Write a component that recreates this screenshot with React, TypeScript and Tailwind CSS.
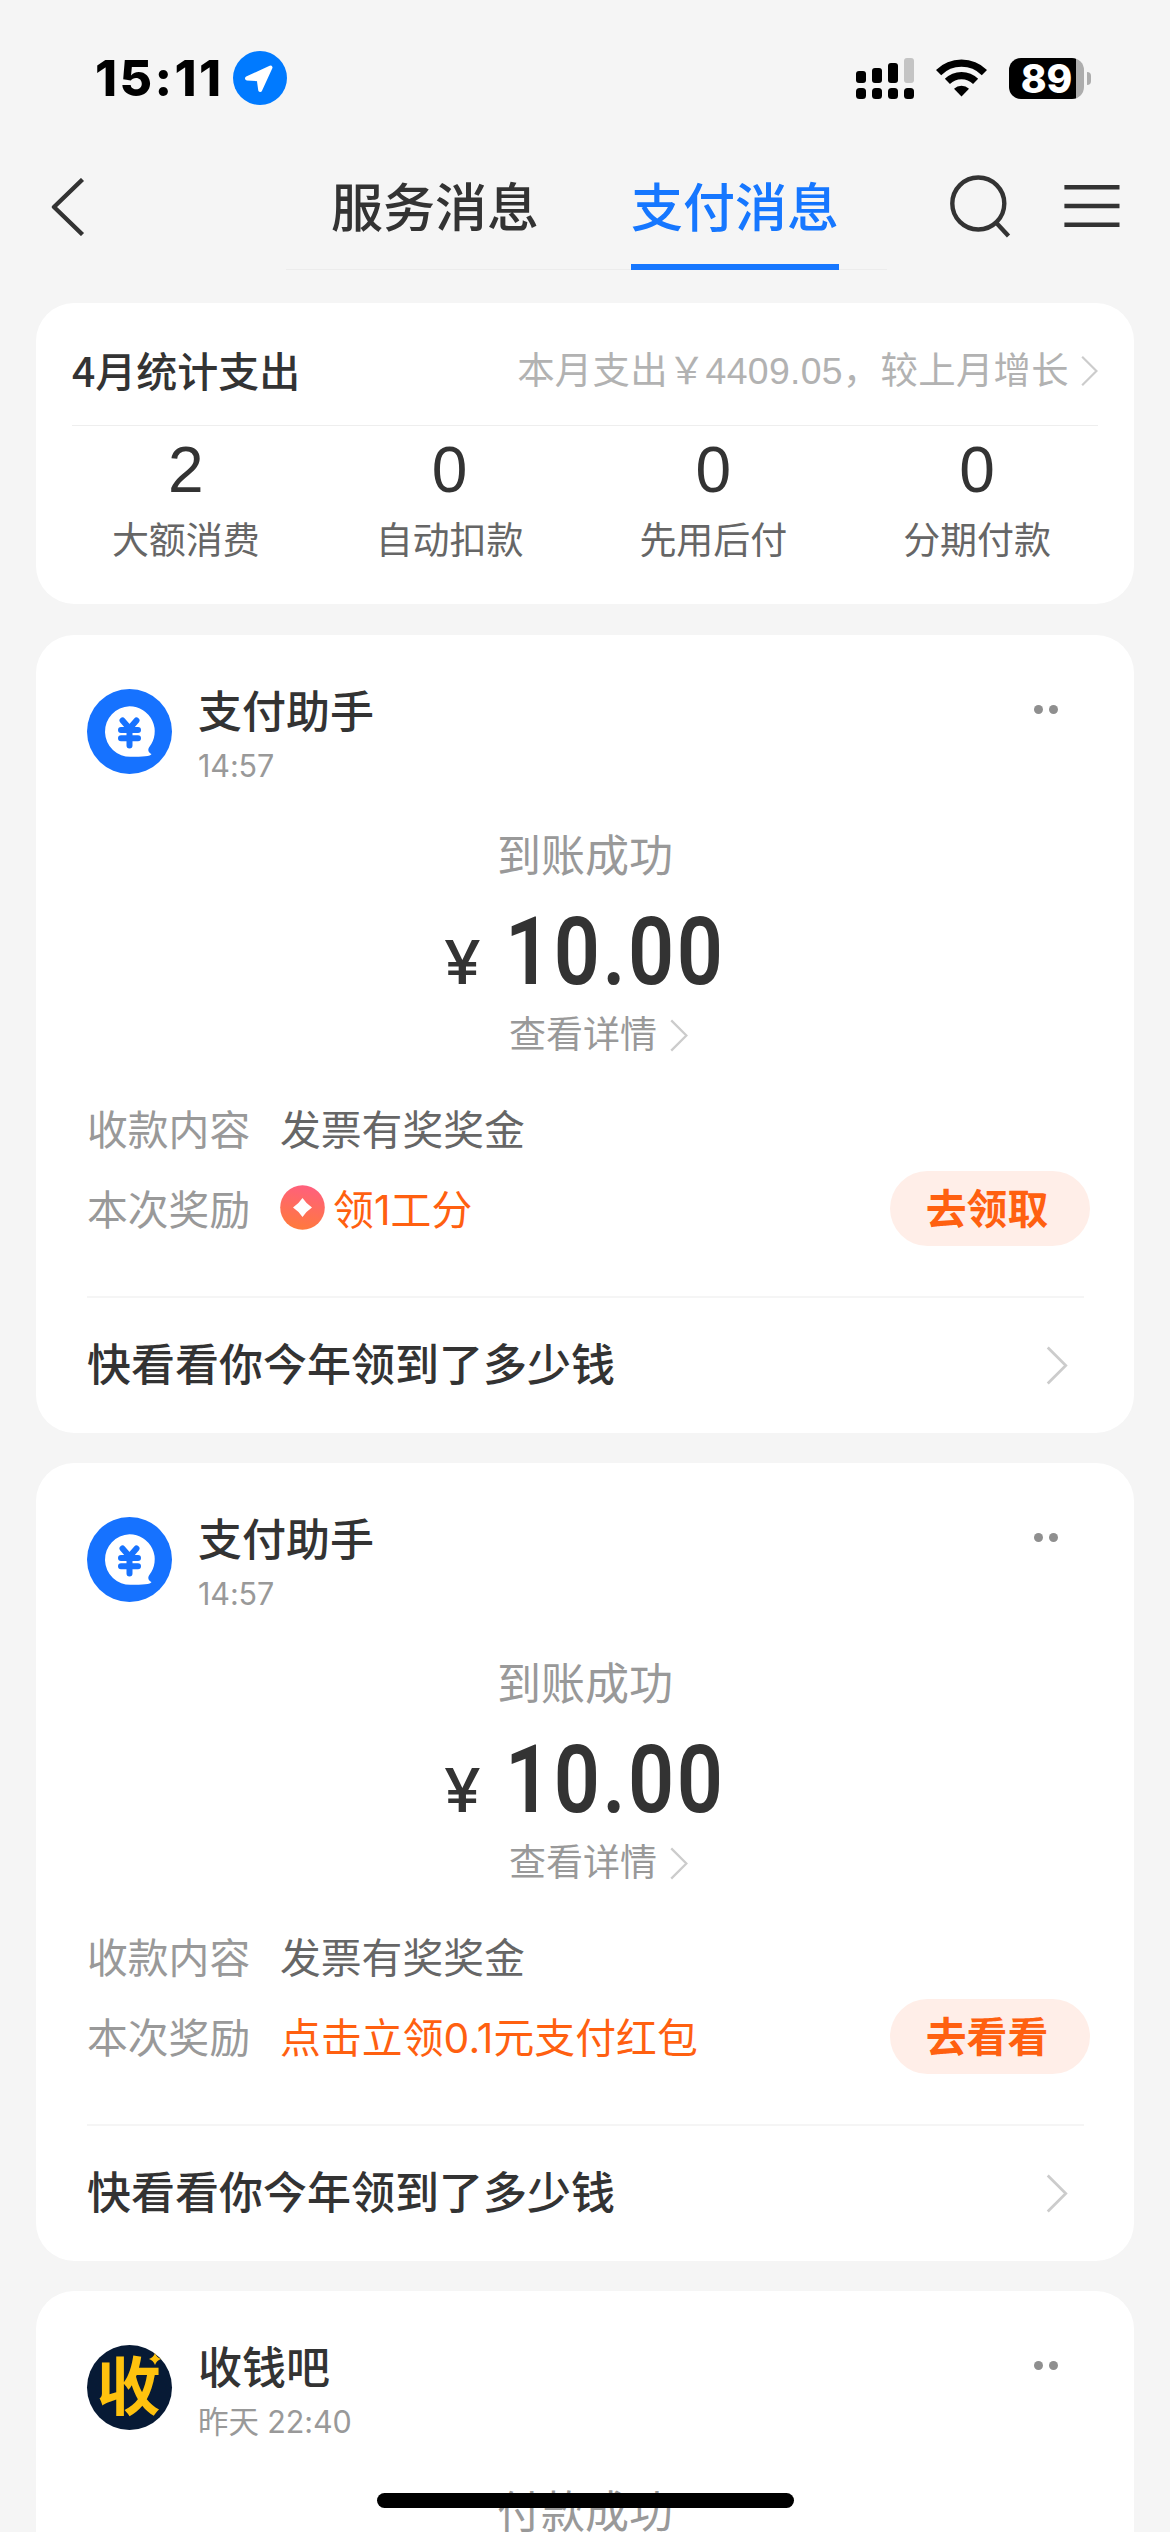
import React from 'react'

type Reward = {
    text: string
    action: string
    coin?: boolean
}

type Message = {
    sender: string
    time: string
    status: string
    amount?: string
    content?: string
    reward?: Reward
    footer?: string
    logo: 'assistant' | 'shouqianba'
}

const stats = [
    { value: 2, label: '大额消费' },
    { value: 0, label: '自动扣款' },
    { value: 0, label: '先用后付' },
    { value: 0, label: '分期付款' },
]

const messages: Message[] = [
    {
        sender: '支付助手',
        time: '14:57',
        status: '到账成功',
        amount: '10.00',
        content: '发票有奖奖金',
        reward: { text: '领1工分', action: '去领取', coin: true },
        footer: '快看看你今年领到了多少钱',
        logo: 'assistant',
    },
    {
        sender: '支付助手',
        time: '14:57',
        status: '到账成功',
        amount: '10.00',
        content: '发票有奖奖金',
        reward: { text: '点击立领0.1元支付红包', action: '去看看' },
        footer: '快看看你今年领到了多少钱',
        logo: 'assistant',
    },
    {
        sender: '收钱吧',
        time: '昨天 22:40',
        status: '付款成功',
        logo: 'shouqianba',
    },
]

const Chevron = ({ className }: { className: string }) => (
    <svg
        className={className}
        viewBox="0 0 22 40"
        fill="none"
        stroke="currentColor"
        strokeWidth="2.8"
    >
        <path d="M1.5 1.5 L20 20 L1.5 38.5" />
    </svg>
)

const StatusBar = () => (
    <div className="flex h-[156px] items-center pl-[95px] pr-[79px]">
        <span className="w-[138px] whitespace-nowrap font-['Inter',sans-serif] text-[50px] font-extrabold leading-[60px] tracking-[2.4px] text-black">
            15:11
        </span>
        <svg className="h-[54px] w-[54px]" viewBox="0 0 54 54">
            <circle cx="27" cy="27" r="27" fill="#007aff" />
            <path
                d="M37.5 16.5 L27.2 39 L25.7 28.3 L14 27.4 Z"
                fill="#fff"
                stroke="#fff"
                strokeWidth="4"
                strokeLinejoin="round"
            />
        </svg>
        <div className="ml-auto flex items-center">
            <svg className="h-[41px] w-[59px]" viewBox="0 0 59 41">
                <rect x="0" y="13" width="10" height="12" rx="3" />
                <rect x="16" y="10" width="10" height="15" rx="3" />
                <rect x="32" y="5" width="10" height="20" rx="3" />
                <rect x="48" y="0" width="10" height="25" rx="3" fill="#c4c4c4" />
                <rect x="0" y="30" width="10" height="11" rx="3.5" />
                <rect x="16" y="30" width="10" height="11" rx="3.5" />
                <rect x="32" y="30" width="10" height="11" rx="3.5" />
                <rect x="48" y="30" width="10" height="11" rx="3.5" />
            </svg>
            <svg className="ml-[21px] h-[38px] w-[51px]" viewBox="0 0 51 38">
                <path
                    d="M2.6 13.6 A32.5 32.5 0 0 1 48.4 13.6"
                    fill="none"
                    stroke="#000"
                    strokeWidth="7.4"
                />
                <path
                    d="M11.4 22.4 A20 20 0 0 1 39.6 22.4"
                    fill="none"
                    stroke="#000"
                    strokeWidth="7.2"
                />
                <path d="M25.5 37.5 L18 29.8 A10.8 10.8 0 0 1 33 29.8 Z" />
            </svg>
            <div className="ml-[22px] flex h-[41px] w-[75px] items-center justify-center rounded-[12px] bg-[linear-gradient(90deg,#000_67px,#adadad_67px)]">
                <span className="font-['Inter',sans-serif] text-[39px] font-extrabold leading-[41px] text-white">
                    89
                </span>
            </div>
            <div className="ml-[3px] h-[13px] w-[4px] rounded-r-full bg-[#adadad]" />
        </div>
    </div>
)

const NavBar = () => (
    <div className="flex h-[114px] pl-[50px] text-[#333]">
        <svg
            className="mt-[22px] h-[58px] w-[36px]"
            viewBox="0 0 36 58"
            fill="none"
            stroke="currentColor"
            strokeWidth="4.4"
        >
            <path d="M32.5 1.5 L4 29 L32.5 56.5" strokeLinejoin="round" />
        </svg>
        <div className="ml-[200px] flex w-[601px] gap-[92px] border-b border-[#ececec] pl-[45px] text-[52px] font-medium leading-[106px]">
            <div>服务消息</div>
            <div className="-mb-px flex flex-col justify-between text-[#1677ff]">
                支付消息
                <div className="h-[6px] bg-[#1677ff]" />
            </div>
        </div>
        <svg
            className="ml-[63px] mt-[18px] h-[66px] w-[62px]"
            viewBox="0 0 62 66"
            fill="none"
            stroke="currentColor"
            strokeWidth="4.4"
        >
            <circle cx="28.3" cy="29.5" r="26" />
            <path d="M46 48.5 L58.5 62" />
        </svg>
        <svg
            className="ml-[52px] mt-[22px] h-[56px] w-[56px]"
            viewBox="0 0 56 56"
            stroke="currentColor"
            strokeWidth="4.4"
        >
            <path d="M0.4 9.3 H55.5 M0.4 28 H55.5 M0.4 46.7 H55.5" />
        </svg>
    </div>
)

const StatsCard = () => (
    <div className="mt-[33px] h-[301px] rounded-[38px] bg-white">
        <div className="mx-9 flex h-[123px] items-center border-b border-[#eee] pt-[14px]">
            <span className="mb-[5px] font-['Noto_Sans_CJK_SC',sans-serif] text-[41px] font-medium leading-[48px] text-[#333]">
                4月统计支出
            </span>
            <span className="ml-auto whitespace-nowrap text-[37.4px] leading-[44px] tracking-[0.3px] text-[#b2b2b2]">
                本月支出￥4409.05，较上月增长
            </span>
            <Chevron className="ml-3 h-[32px] w-[17px] text-[#ccc]" />
        </div>
        <div className="grid grid-cols-4 pl-[18px] pr-[25px] pt-3 text-center">
            {stats.map((stat) => (
                <div key={stat.label}>
                    <div className="text-[64px] leading-[64px] text-[#333]">
                        {stat.value}
                    </div>
                    <div className="mt-[18px] text-[37px] leading-[44px] text-[#666]">
                        {stat.label}
                    </div>
                </div>
            ))}
        </div>
    </div>
)

const AssistantLogo = () => (
    <svg className="h-[85px] w-[85px]" viewBox="0 0 85 85">
        <circle cx="42.5" cy="42.5" r="42.5" fill="#1672ff" />
        <path
            d="M42.5 17.3 A25.2 25.2 0 0 1 62 58.5 C60.5 61 61.5 63.5 64.5 65 C64 67.3 55 67.8 44 67.8 A25.2 25.2 0 0 1 42.5 17.3 Z"
            fill="#fff"
        />
        <path
            d="M35.5 31.5 L42.5 39.5 L49.5 31.5 M42.5 39.5 V56.5 M34 41 H51 M34 49.3 H51"
            fill="none"
            stroke="#1672ff"
            strokeWidth="6"
            strokeLinecap="round"
            strokeLinejoin="round"
        />
    </svg>
)

const ShouqianbaLogo = () => (
    <div className="relative flex h-[85px] w-[85px] items-center justify-center rounded-full bg-[#071a35]">
        <span className="pr-[2px] text-[64px] font-bold leading-[64px] text-[#ffc20e]">
            收
        </span>
        <svg
            className="absolute right-[11px] top-[8px] h-[12px] w-[12px]"
            viewBox="0 0 12 12"
            fill="#ffc20e"
        >
            <path d="M6 0 Q7.5 4.5 12 6 Q7.5 7.5 6 12 Q4.5 7.5 0 6 Q4.5 4.5 6 0 Z" />
        </svg>
    </div>
)

const Coin = () => (
    <svg className="mb-[2px] mr-[8px] h-[45px] w-[45px]" viewBox="0 0 45 45">
        <defs>
            <linearGradient id="coin" x1="0.6" y1="0" x2="0.4" y2="1">
                <stop offset="0" stopColor="#ff5f7e" />
                <stop offset="1" stopColor="#ff7a3c" />
            </linearGradient>
        </defs>
        <circle cx="22.5" cy="22.5" r="22.3" fill="url(#coin)" />
        <path
            d="M22.5 13 Q26.3 18.7 32 22.5 Q26.3 26.3 22.5 32 Q18.7 26.3 13 22.5 Q18.7 18.7 22.5 13 Z"
            fill="#fff"
        />
    </svg>
)

const MessageCard = ({ message }: { message: Message }) => {
    return (
        <div className="h-[798px] shrink-0 rounded-[38px] bg-white pl-[51px] pr-[44px] pt-[54px]">
            <div className="flex h-[94px]">
                {message.logo === 'assistant' ? (
                    <AssistantLogo />
                ) : (
                    <ShouqianbaLogo />
                )}
                <div className="ml-[26px]">
                    <div className="text-[44px] font-medium leading-[48px] text-[#333]">
                        {message.sender}
                    </div>
                    <div className="mt-[11px] font-['Inter','Noto_Sans_CJK_SC',sans-serif] text-[30.5px] leading-[36px] tracking-[-0.1px] text-[#999]">
                        {message.time}
                    </div>
                </div>
                <div className="ml-auto mr-[32px] mt-[16px] flex gap-[6px]">
                    <div className="h-[9px] w-[9px] rounded-full bg-[#8f8f8f]" />
                    <div className="h-[9px] w-[9px] rounded-full bg-[#8f8f8f]" />
                </div>
            </div>
            <div className="mt-[48px] pr-[7px] text-center text-[44px] leading-[52px] text-[#999]">
                {message.status}
            </div>
            {message.amount && (
                <div className="mt-[29px] flex h-[80px] items-baseline pl-[357px] text-[#333]">
                    <span className="w-[61px] origin-left scale-x-110 font-['Inter',sans-serif] text-[60px] font-medium leading-[80px]">
                        ¥
                    </span>
                    <span className="origin-left scale-x-[0.86] font-['Roboto',sans-serif] text-[94px] font-semibold leading-[80px] tracking-[3px]">
                        {message.amount}
                    </span>
                </div>
            )}
            {message.amount && (
                <div className="mt-[22px] flex items-center pl-[422px] text-[37px] leading-[44px] text-[#999]">
                    查看详情
                    <Chevron className="mb-[2px] ml-[13px] h-[33px] w-[18px] text-[#ccc]" />
                </div>
            )}
            {message.content && (
                <div className="mt-[49px] flex text-[40.8px] leading-[48px]">
                    <span className="w-[193px] text-[#999]">收款内容</span>
                    <span className="text-[#666]">{message.content}</span>
                </div>
            )}
            {message.reward && (
                <div className="mt-4 flex h-[75px] items-center text-[40.8px] leading-[48px] text-[#ff6010]">
                    <span className="w-[193px] pt-[4px] text-[#999]">
                        本次奖励
                    </span>
                    {message.reward.coin && <Coin />}
                    <span className="pt-[3px] font-['Inter','Noto_Sans_CJK_SC',sans-serif] tracking-[0.1px]">
                        {message.reward.text}
                    </span>
                    <button className="ml-auto h-[75px] w-[200px] rounded-full bg-[#ffeee8] pr-[6px] pt-[3px] font-bold">
                        {message.reward.action}
                    </button>
                </div>
            )}
            {message.footer && (
                <div className="mr-[6px] mt-[50px] flex h-[137px] items-center border-t-2 border-[#f5f5f5] pr-[16px] text-[44px] font-medium text-[#333]">
                    {message.footer}
                    <Chevron className="ml-auto h-[39px] w-[22px] text-[#ccc]" />
                </div>
            )}
        </div>
    )
}

const App = () => {
    return (
        <div className="relative h-[2532px] w-[1170px] overflow-hidden bg-[#f5f5f5] font-['Liberation_Sans','Noto_Sans_CJK_SC',sans-serif]">
            <StatusBar />
            <NavBar />
            <div className="px-9">
                <StatsCard />
                <div className="mt-[31px] flex flex-col gap-[30px]">
                    {messages.map((message, index) => (
                        <MessageCard key={index} message={message} />
                    ))}
                </div>
            </div>
            {/* Home indicator */}
            <div className="absolute bottom-[24px] left-[377px] h-[15px] w-[417px] rounded-full bg-black" />
        </div>
    )
}

export default App
